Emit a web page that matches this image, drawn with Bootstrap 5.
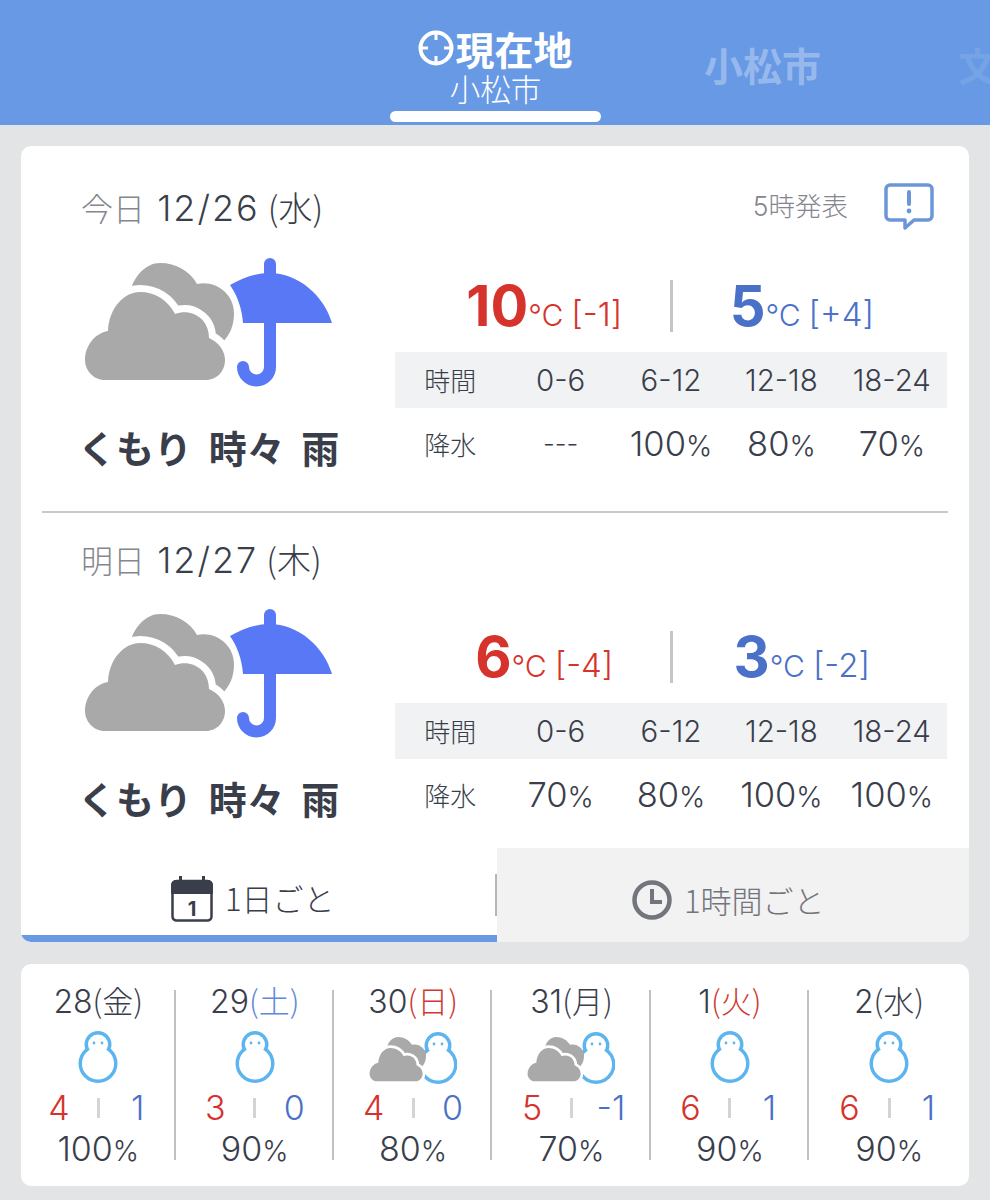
<!DOCTYPE html>
<html lang="ja">
<head>
<meta charset="utf-8">
<title>天気</title>
<link href="https://cdn.jsdelivr.net/npm/bootstrap@5.3.0/dist/css/bootstrap.min.css" rel="stylesheet">
<style>
html,body{height:1200px;overflow:hidden}
body{background:#e3e4e5;font-family:Inter,"Noto Sans CJK JP",sans-serif;color:#3a3e4b;font-weight:300}
.wx-header{height:125px;background:#6899e4;overflow:hidden;position:relative;color:#fff}
.wx-tab{height:125px;flex:0 0 auto;text-align:center}
.wx-tab-on{width:211px;margin-left:390px;padding-top:25px}
.wx-tab-title{font-size:39px;font-weight:700;line-height:46px;display:flex;align-items:center;justify-content:center;gap:1px;font-family:"Noto Sans CJK JP",sans-serif;white-space:nowrap}
.wx-tab-sub{font-size:30.5px;line-height:34px;font-weight:300;font-family:"Noto Sans CJK JP",sans-serif}
.wx-tab-bar{position:absolute;left:390px;top:111px;width:211px;height:11px;border-radius:6px;background:#fff}
.wx-tab-off{width:205px;margin-left:59px;padding-top:41px;color:rgba(255,255,255,.32)}
.wx-tab-far{width:60px;margin-left:93px;padding-top:41px;color:rgba(255,255,255,.1)}
.wx-card{margin:21px 21px 0;width:948px;background:#fff;border:0;border-radius:10px;overflow:hidden}
.wx-main{height:796px;padding-top:14px;position:relative}
.wx-day{margin:0 21px;height:351px}
.wx-day+.wx-day{height:336px;border-top:2px solid #c8c9cb;margin-top:0}
.wx-daytop{height:94px;padding:0 14px 0 39px}
.wx-day+.wx-day .wx-daytop{height:92px}
.wx-date{font-size:36px;line-height:40px;font-weight:300;white-space:nowrap;letter-spacing:2px}
.wx-date b{font-weight:300;color:#85878f;font-family:"Noto Sans CJK JP",sans-serif;font-size:32px;letter-spacing:0}
.wx-date i{font-style:normal;font-size:34px;font-family:"Noto Sans CJK JP",sans-serif;letter-spacing:0;margin-left:-4px}
.wx-pub{font-size:26.5px;color:#85878f;margin-right:36px;font-weight:300}
.wx-left{width:353px;padding-top:4px;text-align:left}
.wx-bigicon{display:block;width:248px;height:130px;margin-left:42px}
.wx-name{font-size:38px;font-weight:700;line-height:46px;margin-top:36px;margin-left:36px;font-family:"Noto Sans CJK JP",sans-serif;white-space:nowrap;word-spacing:8px}
.wx-right{width:552px;padding-top:26px}
.wx-temps{height:52px;padding:0 20px}
.wx-half{flex:1 1 0;display:flex;justify-content:center;align-items:baseline;height:52px;line-height:52px;white-space:nowrap;padding-left:4px}
.wx-half+.wx-half{border-left:3px solid #c4c5c7}
.wx-hi{color:#d5332c}.wx-lo{color:#4a70c8}
.wx-num{font-size:56px;font-weight:700}
.wx-unit{font-size:30px;font-weight:300;margin-right:8px;font-family:Inter,sans-serif}
.wx-diff{font-size:33px;font-weight:300}
.wx-grid{display:grid;grid-template-columns:repeat(5,1fr);text-align:center;font-size:29.5px}
.wx-grid-head{margin-top:20px;height:56px;line-height:56px;background:#f1f2f4}
.wx-grid-body{height:72px;line-height:72px}
.wx-grid span.wx-cjk{font-size:26px;font-family:"Noto Sans CJK JP",sans-serif}
.wx-grid span.wx-dash{font-size:26px}
.wx-grid span small{font-size:28px}
.wx-grid span.wx-big{font-size:34.5px}
.wx-bottom{position:absolute;left:0;right:0;bottom:0;height:94px}
.wx-bt{flex:1 1 0;height:94px;display:flex;align-items:center;justify-content:center;font-size:31px;font-family:"Noto Sans CJK JP",sans-serif;font-weight:300}
.wx-bt-on{border-bottom:7px solid #6899e4;position:relative;gap:12px;padding-top:14px;padding-right:12px}
.wx-bt-on::after{content:"";position:absolute;right:0;top:26px;height:42px;width:2px;background:#b5b6b9}
.wx-bt-off{background:#f2f2f3;color:#73757c;gap:12px;padding-top:10px;padding-right:9px}
.wx-strip{margin-top:22px;height:222px;display:flex}
.wx-col{flex:0 0 158.4px;min-width:0;text-align:center;position:relative;padding-top:18px}
.wx-col:first-child{flex-basis:154.5px}
.wx-col:last-child{flex:1 1 0}
.wx-col:not(:last-child)::after{content:"";position:absolute;right:0;top:26px;height:170px;width:2px;background:#c0c1c3}
.wx-col-date{font-size:32px;line-height:36px;white-space:nowrap}
.wx-col-date span{font-family:"Noto Sans CJK JP",sans-serif;font-size:31px}
.wx-sat{color:#5f88d8}.wx-sun{color:#cf3a30}
.wx-ic{height:52px;margin-top:12px;display:flex;justify-content:center;align-items:flex-end}
.wx-t{display:flex;justify-content:center;align-items:center;margin-top:5px;height:38px;font-size:34px;line-height:38px}
.wx-t span{width:76px}
.wx-t i{width:3px;height:20px;background:#d3d4d6;display:block;flex:none}
.wx-pc{font-size:34px;line-height:44px}
.wx-pc small{font-size:28px}
</style>
</head>
<body>
<svg width="0" height="0" class="position-absolute">
<defs>
<symbol id="cloud" viewBox="0 0 152 124">
<path fill="#a9a9a9" d="M44 42C48 18 62 5 76 5C92 5 106 13 113 26C132 22 150 36 150 55C150 68 146 76 139 84L100 100Z"/>
<path fill="#a9a9a9" stroke="#fff" stroke-width="14" paint-order="stroke" d="M21 122C9 122 1 112 1 102C1 88 11 75 24 73C25 50 40 34 56 34C71 34 84 42 91 56C107 50 125 60 125 80C134 84 141 92 141 102C141 113 133 122 122 122Z"/>
</symbol>
<symbol id="snow" viewBox="0 0 40 54">
<circle cx="20" cy="14.5" r="11.5" fill="none" stroke="#5db5f0" stroke-width="4"/>
<circle cx="20" cy="33.5" r="17.5" fill="none" stroke="#5db5f0" stroke-width="4"/>
<circle cx="20" cy="14.5" r="10" fill="#fff"/>
<circle cx="20" cy="33.5" r="16" fill="#fff"/>
<circle cx="16" cy="13" r="1.4" fill="#5db5f0"/>
<circle cx="24" cy="13" r="1.4" fill="#5db5f0"/>
</symbol>
<symbol id="cloudrain" viewBox="0 0 248 130">
<use href="#cloud" x="0" y="0" width="152" height="124"/>
<path fill="#5878f5" d="M146 27C158 20 172 15 185 15C215 15 240 38 248 65L159 65C158 50 153 37 146 27Z"/>
<path fill="none" stroke="#5878f5" stroke-width="12" stroke-linecap="round" d="M186 6V18M186 60V109A13.5 13.5 0 0 1 159 109"/>
</symbol>
</defs>
</svg>

<header class="wx-header d-flex">
<div class="wx-tab wx-tab-on">
<div class="wx-tab-title">
<svg width="36" height="36" viewBox="0 0 36 36" fill="none" stroke="#fff" stroke-width="4"><circle cx="18" cy="18" r="15.5"/><path stroke-width="3" d="M18 3V10M18 26V33M3 18H10M26 18H33"/></svg>
<span>現在地</span></div>
<div class="wx-tab-sub">小松市</div>
</div>
<div class="wx-tab-bar"></div>
<div class="wx-tab wx-tab-off"><div class="wx-tab-title">小松市</div></div>
<div class="wx-tab wx-tab-far"><div class="wx-tab-title justify-content-start">文</div></div>
</header>

<section class="card wx-card wx-main">
<div class="wx-day">
<div class="wx-daytop d-flex align-items-center justify-content-between">
<div class="wx-date"><b>今日</b> 12/26 <i>(水)</i></div>
<div class="d-flex align-items-center">
<span class="wx-pub">5時発表</span>
<svg width="50" height="48" viewBox="0 0 50 48" fill="none"><path stroke="#6b97d8" stroke-width="3.5" stroke-linejoin="round" d="M6 2H44A4 4 0 0 1 48 6V33A4 4 0 0 1 44 37H30L21 45V37H6A4 4 0 0 1 2 33V6A4 4 0 0 1 6 2Z"/><path stroke="#6b97d8" stroke-width="4" stroke-linecap="round" d="M25 9V21"/><circle cx="25" cy="28" r="2.4" fill="#6b97d8"/></svg>
</div>
</div>
<div class="d-flex">
<div class="wx-left">
<svg class="wx-bigicon"><use href="#cloudrain" width="248" height="130"/></svg>
<div class="wx-name">くもり 時々 雨</div>
</div>
<div class="wx-right">
<div class="wx-temps d-flex">
<div class="wx-half wx-hi"><span class="wx-num">10</span><span class="wx-unit">℃</span><span class="wx-diff">[-1]</span></div>
<div class="wx-half wx-lo"><span class="wx-num">5</span><span class="wx-unit">℃</span><span class="wx-diff">[+4]</span></div>
</div>
<div class="wx-grid wx-grid-head"><span class="wx-cjk">時間</span><span>0-6</span><span>6-12</span><span>12-18</span><span>18-24</span></div>
<div class="wx-grid wx-grid-body"><span class="wx-cjk">降水</span><span class="wx-dash">---</span><span class="wx-big">100<small>%</small></span><span class="wx-big">80<small>%</small></span><span class="wx-big">70<small>%</small></span></div>
</div>
</div>
</div>

<div class="wx-day">
<div class="wx-daytop d-flex align-items-center">
<div class="wx-date"><b>明日</b> 12/27 <i>(木)</i></div>
</div>
<div class="d-flex">
<div class="wx-left">
<svg class="wx-bigicon"><use href="#cloudrain" width="248" height="130"/></svg>
<div class="wx-name">くもり 時々 雨</div>
</div>
<div class="wx-right">
<div class="wx-temps d-flex">
<div class="wx-half wx-hi"><span class="wx-num">6</span><span class="wx-unit">℃</span><span class="wx-diff">[-4]</span></div>
<div class="wx-half wx-lo"><span class="wx-num">3</span><span class="wx-unit">℃</span><span class="wx-diff">[-2]</span></div>
</div>
<div class="wx-grid wx-grid-head"><span class="wx-cjk">時間</span><span>0-6</span><span>6-12</span><span>12-18</span><span>18-24</span></div>
<div class="wx-grid wx-grid-body"><span class="wx-cjk">降水</span><span class="wx-big">70<small>%</small></span><span class="wx-big">80<small>%</small></span><span class="wx-big">100<small>%</small></span><span class="wx-big">100<small>%</small></span></div>
</div>
</div>
</div>

<div class="wx-bottom d-flex">
<div class="wx-bt wx-bt-on">
<svg width="42" height="46" viewBox="0 0 42 46"><rect x="1.5" y="5" width="39" height="39.5" rx="4" fill="#fff" stroke="#3a3e4b" stroke-width="2.5"/><path fill="#3a3e4b" d="M5 4H8V0H11V4H31V0H34V4H37A5 5 0 0 1 42 9V18H0V9A5 5 0 0 1 5 4Z"/><text x="21" y="40" text-anchor="middle" font-family="Inter,sans-serif" font-weight="700" font-size="20" fill="#3a3e4b">1</text></svg>
<span>1日ごと</span></div>
<div class="wx-bt wx-bt-off">
<svg width="40" height="40" viewBox="0 0 40 40" fill="none" stroke="#73757c"><circle cx="20" cy="20" r="17.5" stroke-width="4.5"/><path stroke-width="4" d="M20 9V22H30"/></svg>
<span>1時間ごと</span></div>
</div>
</section>

<section class="card wx-card wx-strip flex-row">
<div class="wx-col"><div class="wx-col-date">28<span>(金)</span></div><div class="wx-ic"><svg width="40" height="54"><use href="#snow" width="40" height="54"/></svg></div><div class="wx-t"><span class="wx-hi">4</span><i></i><span class="wx-lo">1</span></div><div class="wx-pc">100<small>%</small></div></div>
<div class="wx-col"><div class="wx-col-date">29<span class="wx-sat">(土)</span></div><div class="wx-ic"><svg width="40" height="54"><use href="#snow" width="40" height="54"/></svg></div><div class="wx-t"><span class="wx-hi">3</span><i></i><span class="wx-lo">0</span></div><div class="wx-pc">90<small>%</small></div></div>
<div class="wx-col"><div class="wx-col-date">30<span class="wx-sun">(日)</span></div><div class="wx-ic"><svg width="88" height="54" viewBox="0 0 88 54"><use href="#snow" x="49" y="1" width="40" height="54"/><use href="#cloud" x="0" y="5" width="58" height="47"/></svg></div><div class="wx-t"><span class="wx-hi">4</span><i></i><span class="wx-lo">0</span></div><div class="wx-pc">80<small>%</small></div></div>
<div class="wx-col"><div class="wx-col-date">31<span>(月)</span></div><div class="wx-ic"><svg width="88" height="54" viewBox="0 0 88 54"><use href="#snow" x="49" y="1" width="40" height="54"/><use href="#cloud" x="0" y="5" width="58" height="47"/></svg></div><div class="wx-t"><span class="wx-hi">5</span><i></i><span class="wx-lo">-1</span></div><div class="wx-pc">70<small>%</small></div></div>
<div class="wx-col"><div class="wx-col-date">1<span class="wx-sun">(火)</span></div><div class="wx-ic"><svg width="40" height="54"><use href="#snow" width="40" height="54"/></svg></div><div class="wx-t"><span class="wx-hi">6</span><i></i><span class="wx-lo">1</span></div><div class="wx-pc">90<small>%</small></div></div>
<div class="wx-col"><div class="wx-col-date">2<span>(水)</span></div><div class="wx-ic"><svg width="40" height="54"><use href="#snow" width="40" height="54"/></svg></div><div class="wx-t"><span class="wx-hi">6</span><i></i><span class="wx-lo">1</span></div><div class="wx-pc">90<small>%</small></div></div>
</section>
<script src="https://cdn.jsdelivr.net/npm/bootstrap@5.3.0/dist/js/bootstrap.bundle.min.js"></script>
</body>
</html>
